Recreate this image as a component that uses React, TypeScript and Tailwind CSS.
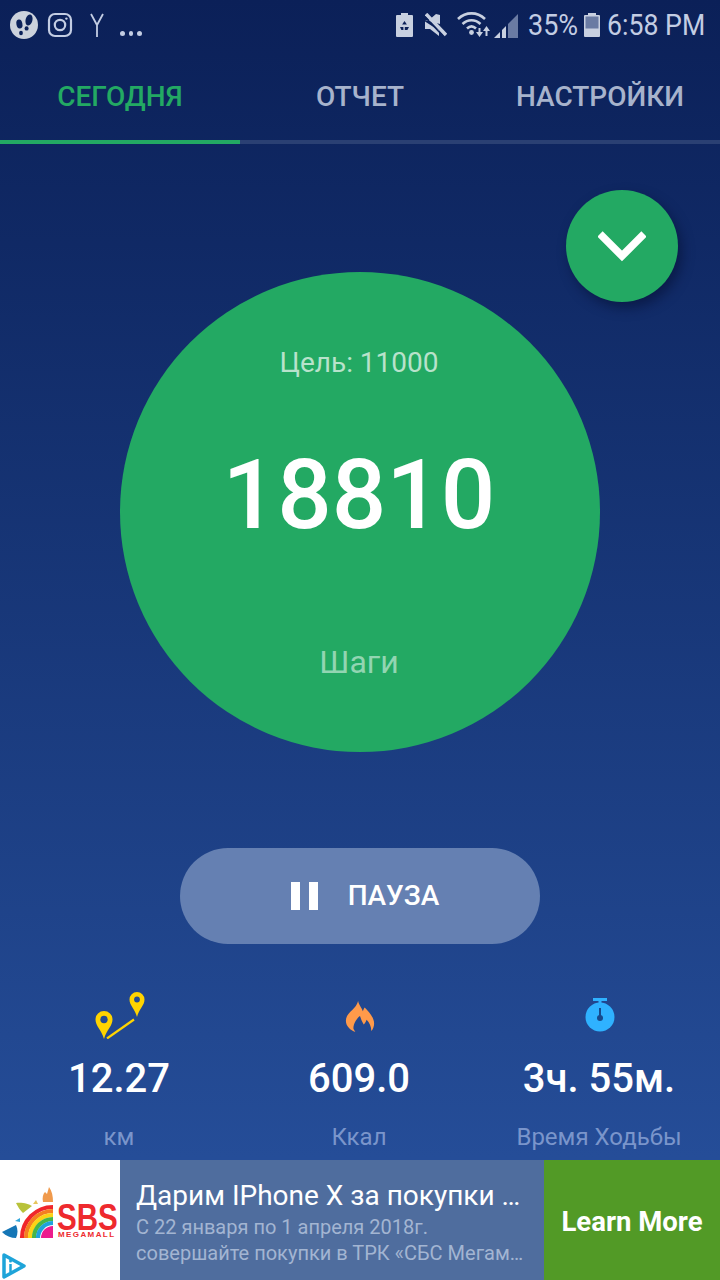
import React from "react";

const font = { fontFamily: "Roboto, sans-serif" };

function FeetIcon() {
  return (
    <svg width="28" height="28" viewBox="0 0 28 28">
      <circle cx="14" cy="14" r="14" fill="#ccd2dc" />
      <ellipse cx="19" cy="9" rx="3.4" ry="5.6" transform="rotate(15 19 9)" fill="#0b2159" />
      <ellipse cx="16.6" cy="17.4" rx="2" ry="2.2" fill="#0b2159" />
      <ellipse cx="9.4" cy="13" rx="3" ry="4.6" transform="rotate(-10 9.4 13)" fill="#0b2159" />
      <ellipse cx="11" cy="22" rx="1.9" ry="2.2" fill="#0b2159" />
    </svg>
  );
}

function InstagramIcon() {
  return (
    <svg width="26" height="26" viewBox="0 0 26 26" fill="none" stroke="#c3cde3" strokeWidth="2.2">
      <rect x="2" y="2" width="22" height="22" rx="6" />
      <circle cx="13" cy="13" r="5.2" />
      <circle cx="19.4" cy="6.6" r="1.2" fill="#c3cde3" stroke="none" />
    </svg>
  );
}

function StatusRight() {
  return (
    <div className="flex items-center">
      <svg width="17" height="24" viewBox="0 0 17 24" className="mr-[12px]">
        <path d="M5 0h7v2h4a1 1 0 0 1 1 1v20a1 1 0 0 1-1 1H1a1 1 0 0 1-1-1V3a1 1 0 0 1 1-1h4z" fill="#c8d0e0" />
        <path d="M8.500 8l2.400 3.400H6.100zM4 14h3.400v3H5.400zM13 14l-1.600 3H8.800v-3z" fill="#0b2159" />
      </svg>
      <svg width="22" height="24" viewBox="0 0 22 24" className="mr-[10px]">
        <path d="M0 7h4l7-6 4 1v9z" fill="#c8d0e0" />
        <path d="M0 8.500V16h5l9 7v-5.500z" fill="#c8d0e0" />
        <path d="M1 1l20 21" stroke="#c8d0e0" strokeWidth="3.500" />
        <path d="M0 4l18 19" stroke="#0b2159" strokeWidth="1.500" />
      </svg>
      <svg width="61" height="26" viewBox="0 0 61 26" className="mr-[10px]">
        <g fill="none" stroke="#c8d0e0" strokeWidth="2.600">
          <path d="M1 7c8-7.500 19-7.500 27 0" />
          <path d="M5.500 12c5.400-5 12.600-5 18 0" />
          <path d="M10 16.500c2.800-2.600 6.200-2.600 9 0" />
        </g>
        <circle cx="14.500" cy="20.500" r="2.400" fill="#c8d0e0" />
        <path d="M19 20l3.500 5 3.500-5zM26 19l3.500-5 3.500 5z" fill="#c8d0e0" />
        <path d="M22.500 16v4M29.500 19v5" stroke="#c8d0e0" strokeWidth="2" />
        <path d="M37 26l6-6v6z" fill="#c8d0e0" />
        <path d="M45 18l4-4v12h-4z" fill="#c8d0e0" />
        <path d="M51 12l10-10v24H51z" fill="#6a7ba3" />
      </svg>
      <span className="w-[56px] origin-left scale-x-[0.9] whitespace-nowrap text-[30px] leading-[30px] text-[#c3cde3]">35%</span>
      <svg width="16" height="24" viewBox="0 0 16 24" className="mr-[7px]">
        <path d="M4 0h8v2h3a1 1 0 0 1 1 1v20a1 1 0 0 1-1 1H1a1 1 0 0 1-1-1V3a1 1 0 0 1 1-1h3z" fill="#c8d0e0" />
        <rect x="1.500" y="3.500" width="13" height="12" fill="#6a7ba3" />
      </svg>
      <span className="w-[99px] origin-left scale-x-[0.89] whitespace-nowrap text-[30px] leading-[30px] text-[#c3cde3]">6:58 PM</span>
    </div>
  );
}

function Pins() {
  return (
    <svg width="50" height="47" viewBox="0 0 50 47" className="-mb-[7px]">
      <path d="M9 47C6.500 38 0.500 34 0.500 27.500a8.500 8.500 0 0 1 17 0c0 6.500-6 10.500-8.500 19.500z" fill="#ffd400" />
      <circle cx="9" cy="27.500" r="3.700" fill="#234b93" />
      <path d="M42 25C40 17 34.500 13.500 34.500 7.500a7.500 7.500 0 0 1 15 0C49.500 13.500 44 17 42 25z" fill="#ffd400" />
      <circle cx="42" cy="7.500" r="2.900" fill="#234b93" />
      <path d="M12 46.500l27-19" stroke="#ffd400" strokeWidth="2.200" />
    </svg>
  );
}

function Flame() {
  return (
    <svg width="32" height="32" viewBox="0 0 32 34">
      <path d="M14 1c1 5 4 7 5 11 1-2 1-3 2-4 5 5 10 11 10 17 0 3-1 6-3 8 0-5-2-9-5-12-1 3-2 4-3 5-2-3-3-6-4-9-3 2-7 8-7 13 0 1 1 2 2 4-5-2-10-6-10-12C1 13 12 10 14 1z" fill="#ff9a4a" />
    </svg>
  );
}

function Watch() {
  return (
    <svg width="30" height="34" viewBox="0 0 30 34">
      <rect x="8" y="0" width="14" height="3" fill="#2fb2ff" />
      <rect x="13.500" y="2" width="3" height="4" fill="#2fb2ff" />
      <circle cx="15" cy="19" r="14.500" fill="#2fb2ff" />
      <rect x="14" y="10" width="2" height="9" fill="#174a8c" />
      <circle cx="15" cy="20" r="3" fill="#174a8c" />
    </svg>
  );
}

function Stat({ icon, value, label }: { icon: React.ReactNode; value: string; label: string }) {
  return (
    <div className="flex w-[240px] flex-col items-center">
      <div className="flex h-[50px] items-end">{icon}</div>
      <div className="mt-[25px] -translate-x-px whitespace-nowrap text-[40px] font-medium leading-[44px] text-white">{value}</div>
      <div className="mt-[22px] -translate-x-px whitespace-nowrap text-[24px] leading-[28px] text-[#7a95cb]">{label}</div>
    </div>
  );
}

function SbsLogo() {
  return (
    <div className="relative h-[120px] w-[120px] shrink-0 overflow-hidden bg-white">
      <svg width="60" height="70" viewBox="0 0 60 70" className="absolute left-0 top-[20px]">
        <g fill="none" strokeWidth="4.200">
          <path d="M22 58a31 31 0 0 1 31-31" stroke="#f0262b" />
          <path d="M26 58a27 27 0 0 1 27-27" stroke="#f57f20" />
          <path d="M30 58a23 23 0 0 1 23-23" stroke="#fbd315" />
          <path d="M34 58a19 19 0 0 1 19-19" stroke="#46b649" />
          <path d="M38 58a15 15 0 0 1 15-15" stroke="#1fa3dc" />
        </g>
        <path d="M41 58a12 12 0 0 1 12-12v12z" fill="#ec1c8e" />
        <path d="M2 52l14-7c2 4 2 9 0 13-5 0-10-2-14-6z" fill="#1576b6" />
        <path d="M15 41l5-3 0 4z" fill="#32a7dc" />
        <path d="M16 23c6-1 13 1 16 3l-9 7c-3-3-5-6-7-10z" fill="#b8c23a" />
        <path d="M33 24l3-4 2 4z" fill="#e6c65c" />
        <path d="M49 7c3 4 4 9 4 15l-10 0c-1-4 0-8 2-10l2 2z" fill="#f09a4c" />
      </svg>
      <div className="absolute left-[57px] top-[44px] origin-left scale-x-[0.82] text-[36px] font-bold leading-[28px] text-[#ee2a2e]" style={{ fontFamily: "'Liberation Sans', sans-serif" }}>SBS</div>
      <div className="absolute left-[58px] top-[72px] whitespace-nowrap text-[8px] font-bold leading-[6px] tracking-[1.4px] text-[#ee2a2e]" style={{ fontFamily: "'Liberation Sans', sans-serif" }}>MEGAMALL</div>
      <svg width="26" height="26" viewBox="0 0 26 26" className="absolute left-[1px] top-[93px]">
        <path d="M3 2l20 11L3 24z" fill="none" stroke="#1ea4d9" strokeWidth="3.500" strokeLinejoin="round" />
        <path d="M9.500 11v8" stroke="#1ea4d9" strokeWidth="2.500" />
        <circle cx="9.500" cy="8" r="1.500" fill="#1ea4d9" />
      </svg>
    </div>
  );
}

export default function App() {
  return (
    <div className="flex h-[1280px] w-[720px] flex-col overflow-hidden bg-gradient-to-b from-[#0b2058] to-[#28529f]" style={font}>
      <div className="flex h-[48px] items-center justify-between pl-[10px] pr-[14px] pt-[2px]">
        <div className="flex items-center">
          <FeetIcon />
          <div className="ml-[9px]"><InstagramIcon /></div>
          <svg width="14" height="24" viewBox="0 0 14 24" className="ml-[17px]" fill="none" stroke="#c3cde3" strokeWidth="1.800">
            <path d="M1 1l6 11 6-11M7 12v12" />
          </svg>
          <div className="ml-[16px] mt-[17px] flex gap-[4px]">
            <span className="size-[4.500px] rounded-full bg-[#c3cde3]" />
            <span className="size-[4.500px] rounded-full bg-[#c3cde3]" />
            <span className="size-[4.500px] rounded-full bg-[#c3cde3]" />
          </div>
        </div>
        <StatusRight />
      </div>

      <div className="flex h-[96px] border-b-[4px] border-[#2a4073] pt-[6px]">
        <div className="-mb-[4px] flex w-[240px] items-center justify-center border-b-[4px] border-[#23a963] text-[28px] font-medium text-[#23a963]">СЕГОДНЯ</div>
        <div className="flex w-[240px] items-center justify-center text-[28px] font-medium text-[#a7b3cc]">ОТЧЕТ</div>
        <div className="flex w-[240px] items-center justify-center text-[28px] font-medium text-[#a7b3cc]">НАСТРОЙКИ</div>
      </div>

      <div className="relative flex flex-1 flex-col items-center pt-[128px]">
        <button className="absolute left-[566px] top-[46px] flex size-[112px] items-center justify-center rounded-full bg-[#23a963] shadow-[4px_6px_12px_rgba(5,15,50,0.55)]">
          <svg width="48" height="32" viewBox="0 0 48 32" fill="none" stroke="white" strokeWidth="7.500">
            <path d="M2 4l22 22L46 4" />
          </svg>
        </button>

        <div className="flex h-[480px] w-[480px] flex-col items-center rounded-full bg-[#23a963]">
          <div className="mt-[73px] -translate-x-px text-[28px] leading-[36px] text-[#b8e2cb]">Цель: 11000</div>
          <div className="mt-[58px] -translate-x-px text-[96px] font-medium leading-[112px] text-white">18810</div>
          <div className="mt-[91px] -translate-x-px text-[32px] leading-[40px] text-[#92d5b2]">Шаги</div>
        </div>

        <button className="mt-[96px] flex h-[96px] w-[360px] items-center justify-center rounded-full bg-[#6580b2] pl-[10px]">
          <span className="mr-[30px] flex gap-[9px]">
            <span className="h-[28px] w-[9px] bg-white" />
            <span className="h-[28px] w-[9px] bg-white" />
          </span>
          <span className="text-[28px] font-medium text-white">ПАУЗА</span>
        </button>

        <div className="mt-[38px] flex">
          <Stat icon={<Pins />} value="12.27" label="км" />
          <Stat icon={<Flame />} value="609.0" label="Ккал" />
          <Stat icon={<Watch />} value="3ч. 55м." label="Время Ходьбы" />
        </div>
      </div>

      <div className="flex h-[120px] w-[720px]">
        <SbsLogo />
        <div className="flex min-w-0 flex-1 flex-col bg-[#4f6d9e] pl-[16px] pt-[18px]">
          <div className="whitespace-nowrap text-[28px] leading-[36px] text-white">Дарим IPhone X за покупки …</div>
          <div className="whitespace-nowrap text-[20px] leading-[26px] text-[#a3b5d2]">
            <div>С 22 января по 1 апреля 2018г.</div>
            <div>совершайте покупки в ТРК «СБС Мегам…</div>
          </div>
        </div>
        <div className="flex w-[176px] items-center justify-center bg-[#529a26] pt-[3px] text-[27.500px] font-bold text-white">Learn More</div>
      </div>
    </div>
  );
}
